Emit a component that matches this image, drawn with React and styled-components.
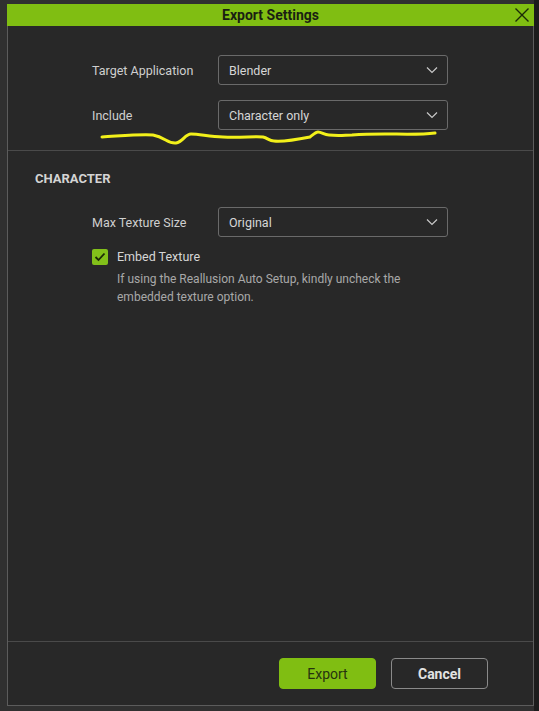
import React from 'react';
import styled, { createGlobalStyle } from 'styled-components';

const Global = createGlobalStyle`
  html, body { margin:0; padding:0; background:#2c2c2c; }
  body { font-family: Roboto, "Liberation Sans", sans-serif; }
`

function Chevron() {
  return (
    <svg width="12" height="8" viewBox="0 0 12 8">
      <path d="M1 1.5 L6 6.5 L11 1.5" fill="none" stroke="#c8c8c8" strokeWidth="1.2" />
    </svg>
  );
}

function Select({ value }) {
  return (
    <SelectBox>
      <span>{value}</span>
      <Chevron />
    </SelectBox>
  );
}

function App() {
  return (
    <Page>
      <Global />
      <Dialog>
        <Header>
          <Title>Export Settings</Title>
          <Close>
            <svg width="16" height="16" viewBox="0 0 16 16">
              <path d="M1.5 1.5 L14.5 14.5 M14.5 1.5 L1.5 14.5" stroke="#1b2a08" strokeWidth="1.4" />
            </svg>
          </Close>
        </Header>
        <TopSection>
          <Row>
            <Label>Target Application</Label>
            <Select value="Blender" />
          </Row>
          <Row>
            <Label>Include</Label>
            <Select value="Character only" />
          </Row>
        </TopSection>
        <Section>
          <SectionTitle>CHARACTER</SectionTitle>
          <Row>
            <Label>Max Texture Size</Label>
            <Select value="Original" />
          </Row>
          <CheckRow>
            <Checkbox>
              <svg width="12" height="10" viewBox="0 0 12 10">
                <path d="M1.5 5 L4.5 8 L10.5 1.5" fill="none" stroke="#1c2a07" strokeWidth="1.8" />
              </svg>
            </Checkbox>
            <div>
              <CheckLabel>Embed Texture</CheckLabel>
              <Help>If using the Reallusion Auto Setup, kindly uncheck the<br />embedded texture option.</Help>
            </div>
          </CheckRow>
        </Section>
        <Footer>
          <Button primary>Export</Button>
          <Button>Cancel</Button>
        </Footer>
      </Dialog>
      <Scribble viewBox="0 0 539 711" width="539" height="711">
        <path
          d="M102 137 C120 136 140 134 153 135 C165 137 168 144 176 143 C183 142 185 134 191 134 C200 134 210 137 223 137 C240 138 255 136 263 137 C268 138 269 141 274 141 C285 142 300 139 310 137 C314 134 316 132 318 132 C322 132 324 135 329 135 C340 136 345 135 352 135 C365 134 375 134 385 134 C400 134 420 135 435 133"
          fill="none"
          stroke="#f2f01a"
          strokeWidth="3"
          strokeLinecap="round"
          strokeLinejoin="round"
        />
      </Scribble>
    </Page>
  );
}

const Page = styled.div`
  position:relative;
  width:539px;
  height:711px;
  padding:4px 0 0 7px;
  box-sizing:border-box;
  background:linear-gradient(to right, #303030 0, #303030 534px, #1c1c1c 534px);
  overflow:hidden;
`
const Dialog = styled.div`
  width:527px;
  height:702px;
  box-sizing:border-box;
  background:#282828;
  border:1px solid #5c5c5c;
  border-top:none;
  display:flex;
  flex-direction:column;
`
const Header = styled.div`
  height:22px;
  background:#80be12;
  display:flex;
  align-items:center;
  justify-content:center;
  position:relative;
  margin:0 -1px;
`
const Title = styled.div`
  font-size:14px;
  font-weight:700;
  color:#1a1f12;
`
const Close = styled.div`
  position:absolute;
  right:4px;
  top:3px;
  display:flex;
`
const TopSection = styled.div`
  padding:29px 85px 20px 84px;
  display:flex;
  flex-direction:column;
  gap:15px;
  border-bottom:1px solid #4a4a4a;
`
const Section = styled.div`
  flex:1;
  padding:20px 85px 0 84px;
  display:flex;
  flex-direction:column;
`
const SectionTitle = styled.div`
  font-size:13px;
  font-weight:700;
  color:#d4d4d4;
  margin-left:-57px;
  margin-bottom:21px;
`
const Row = styled.div`
  display:grid;
  grid-template-columns:126px 1fr;
  align-items:center;
`
const Label = styled.div`
  font-size:12.5px;
  color:#cfcfcf;
`
const SelectBox = styled.div`
  height:30px;
  box-sizing:border-box;
  border:1px solid #6a6a6a;
  border-radius:3px;
  padding:0 9px 0 10px;
  display:flex;
  align-items:center;
  justify-content:space-between;
  font-size:12.5px;
  color:#d6d6d6;
`
const CheckRow = styled.div`
  display:flex;
  gap:9px;
  margin-top:12px;
`
const Checkbox = styled.div`
  width:16px;
  height:16px;
  border-radius:2px;
  background:#82c01a;
  display:flex;
  align-items:center;
  justify-content:center;
  flex-shrink:0;
`
const CheckLabel = styled.div`
  font-size:12.5px;
  color:#d6d6d6;
  line-height:16px;
`
const Help = styled.div`
  font-size:12px;
  color:#a8a8a8;
  line-height:18px;
  margin-top:5px;
`
const Footer = styled.div`
  height:64px;
  box-sizing:border-box;
  border-top:1px solid #4a4a4a;
  display:flex;
  align-items:center;
  justify-content:flex-end;
  gap:15px;
  padding:0 45px 0 0;
`
const Button = styled.div`
  width:97px;
  height:31px;
  box-sizing:border-box;
  border-radius:4px;
  display:flex;
  align-items:center;
  justify-content:center;
  font-size:14px;
  background:${p => p.primary ? '#80be12' : 'transparent'};
  border:1px solid ${p => p.primary ? '#80be12' : '#8a8a8a'};
  color:${p => p.primary ? '#26330f' : '#e2e2e2'};
  font-weight:${p => p.primary ? 400 : 700};
`
const Scribble = styled.svg`
  position:absolute;
  left:0;
  top:0;
  pointer-events:none;
`

export default App;
